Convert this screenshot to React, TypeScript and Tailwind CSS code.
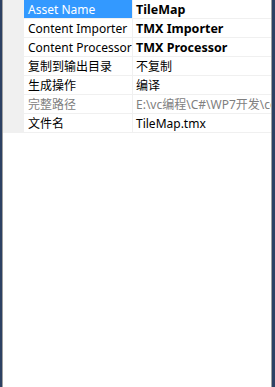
const rows: { name: string; value: string; bold?: boolean; dim?: boolean; selected?: boolean }[] = [
  { name: "Asset Name", value: "TileMap", bold: true, selected: true },
  { name: "Content Importer", value: "TMX Importer", bold: true },
  { name: "Content Processor", value: "TMX Processor", bold: true },
  { name: "复制到输出目录", value: "不复制" },
  { name: "生成操作", value: "编译" },
  { name: "完整路径", value: "E:\\vc编程\\C#\\WP7开发\\code\\TileMap.tmx", dim: true },
  { name: "文件名", value: "TileMap.tmx" },
];

export default function App() {
  return (
    <div
      className="flex h-[387px] w-[275px] bg-[#2d4163] text-[12px] leading-[18px] text-black"
      style={{ fontFamily: '"Segoe UI", "Noto Sans", "Noto Sans CJK SC", sans-serif' }}
    >
      <div className="ml-[2px] mr-[3px] flex flex-1 flex-col overflow-hidden border-x border-[#a0a0a0] bg-white">
        <div className="flex flex-col">
          {rows.map((r) => (
            <div key={r.name} className="flex h-[19px] bg-[#f0f0f0]">
              <div className="w-[21px] shrink-0" />
              <div
                className={`w-[109px] shrink-0 overflow-hidden whitespace-nowrap pl-[4px] pt-[1px] border-b border-r border-[#f0f0f0] ${
                  r.selected ? "bg-[#3399ff] text-white" : r.dim ? "bg-white text-[#808080]" : "bg-white"
                }`}
              >
                {r.name}
              </div>
              <div
                className={`flex-1 overflow-hidden whitespace-nowrap pl-[3px] pt-[1px] border-b border-[#f0f0f0] bg-white ${
                  r.bold ? "font-bold text-[12.5px]" : ""
                } ${r.dim ? "text-[#808080]" : ""}`}
              >
                {r.value}
              </div>
            </div>
          ))}
        </div>
      </div>
    </div>
  );
}
